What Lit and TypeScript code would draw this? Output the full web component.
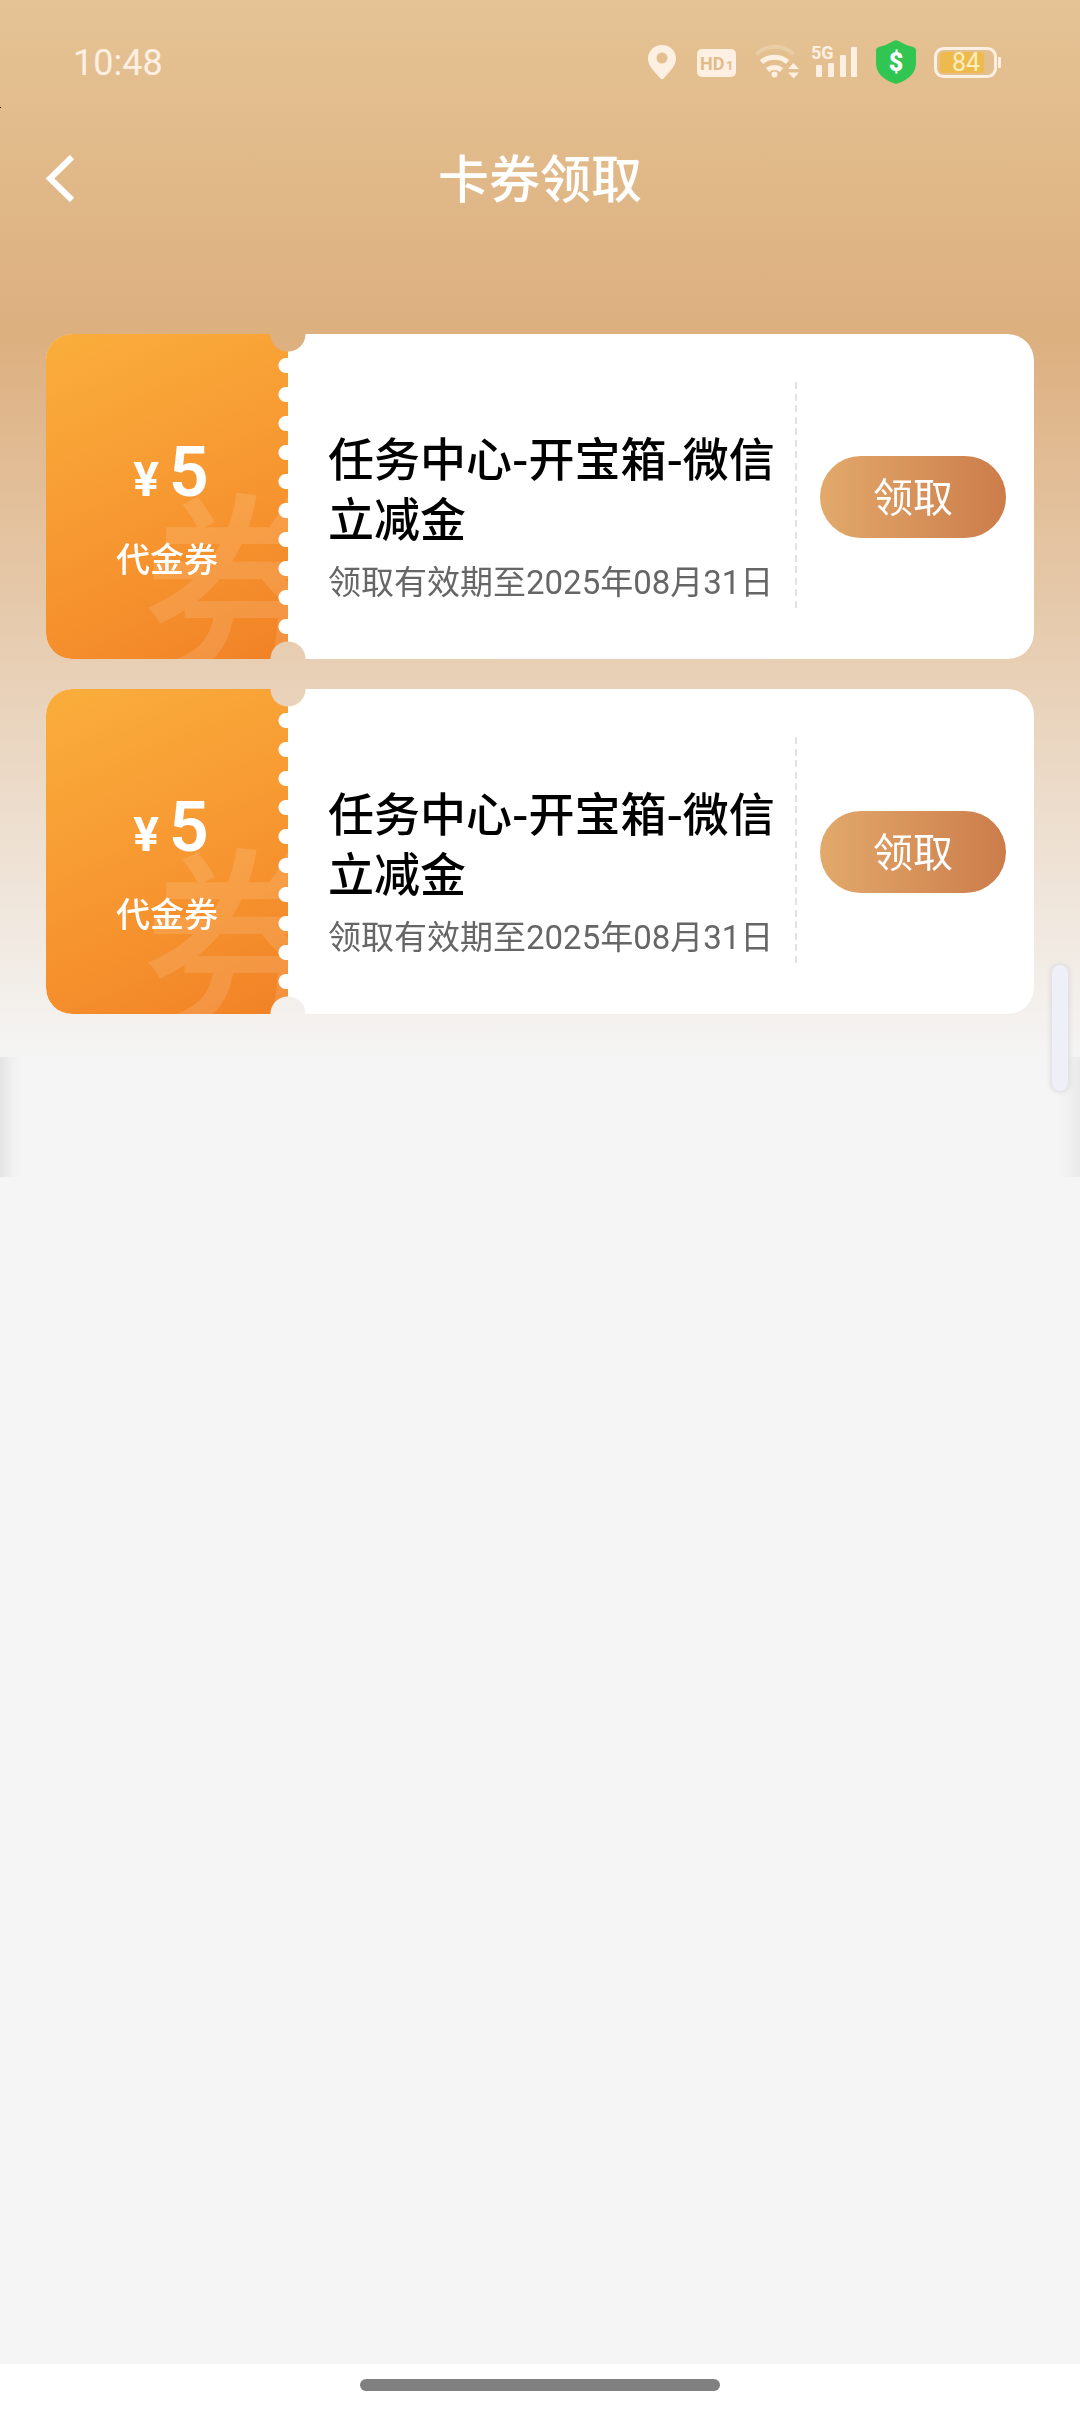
import { LitElement, html, css } from "lit";
import { customElement, property } from "lit/decorators.js";

interface Coupon {
  amount: string;
  kind: string;
  title: string;
  validity: string;
}

const coupons: Coupon[] = [
  { amount: "5", kind: "代金券", title: "任务中心-开宝箱-微信立减金", validity: "领取有效期至2025年08月31日" },
  { amount: "5", kind: "代金券", title: "任务中心-开宝箱-微信立减金", validity: "领取有效期至2025年08月31日" },
];

@customElement("status-bar")
export class StatusBar extends LitElement {
  static styles = css`
    :host {
      display: flex;
      align-items: center;
      justify-content: space-between;
      box-sizing: border-box;
      height: 124px;
      padding: 0 78px 0 73px;
      color: #fdf0e2;
      font-family: Roboto, sans-serif;
    }
    .time {
      padding-top: 2px;
      font-size: 36px;
      line-height: 44px;
    }
    .icons {
      display: block;
    }
    .light {
      fill: #fdf0e2;
    }
    .arc {
      fill: none;
      stroke: #fdf0e2;
      stroke-width: 5;
    }
    .faint {
      stroke-width: 4;
      opacity: 0.25;
    }
    .tag {
      font-weight: 700;
      font-size: 18px;
    }
    .cutout {
      fill: #e2bb8b;
    }
    .small {
      font-size: 13px;
    }
    .shield {
      fill: #31c552;
    }
    .dollar {
      fill: #ffffff;
      font-size: 25px;
      font-weight: 900;
      text-anchor: middle;
    }
    .shell {
      fill: none;
      stroke: #fdf0e2;
      stroke-width: 3;
    }
    .charge {
      fill: #efba4d;
    }
    .level {
      fill: #fdeebc;
      font-size: 25px;
      text-anchor: middle;
    }
  `;

  render() {
    return html`
      <span class="time">10:48</span>
      <svg class="icons" width="354" height="48" viewBox="0 0 354 48" role="img" aria-label="5G 84">
        <path
          class="light"
          fill-rule="evenodd"
          d="M14 7C6 7 0 13 0 20.500C0 28 6 33 12 40Q14 42.500 16 40C22 33 28 28 28 20.500C28 13 22 7 14 7ZM14 14.500a5.500 5.500 0 1 1 0 11a5.500 5.500 0 1 1 0-11Z"
        />
        <rect class="light" x="49" y="11" width="39" height="28" rx="5" />
        <text class="tag cutout" x="52" y="32">HD</text>
        <text class="tag cutout small" x="78" y="32">1</text>

        <path class="arc faint" d="M108.500 16A27 27 0 0 1 145.500 16" />
        <path class="arc" d="M113.500 24A20 20 0 0 1 139.500 24" />
        <path class="arc" d="M119.500 32A11 11 0 0 1 133.500 32" />
        <circle class="light" cx="126.500" cy="36.500" r="3" />
        <path class="light" d="M140 31L145.500 25L151 31ZM140 34.500H151L145.500 40.500Z" />

        <text class="tag light" x="163" y="21">5G</text>
        <rect class="light" x="168" y="27" width="6" height="12" rx="1" />
        <rect class="light" x="180" y="25" width="6" height="14" rx="1" />
        <rect class="light" x="192" y="17" width="6" height="22" rx="1" />
        <rect class="light" x="203" y="9" width="6" height="30" rx="1" />

        <path
          class="shield"
          d="M245.500 3Q248 1.500 250.500 3Q257 7 265 9Q268 9.500 268 13V25C268 35 261 41 251 45Q248 46.500 245 45C235 41 228 35 228 25V13Q228 9.500 231 9Q239 7 245.500 3Z"
        />
        <text class="dollar" x="248" y="33">$</text>

        <rect class="shell" x="287.500" y="10.500" width="60" height="28" rx="8" />
        <rect class="charge" x="292" y="14" width="44" height="21" rx="3" />
        <rect class="light" x="350" y="19" width="3" height="11" rx="1" />
        <text class="level" x="318" y="33">84</text>
      </svg>
    `;
  }
}

@customElement("coupon-card")
export class CouponCard extends LitElement {
  @property({ attribute: false }) coupon!: Coupon;

  static styles = css`
    :host {
      display: block;
      font-family: Roboto, "Noto Sans CJK SC", sans-serif;
    }
    .card {
      display: flex;
      min-height: 325px;
      border-radius: 26px;
      overflow: hidden;
      background: #ffffff;
      -webkit-mask-image: radial-gradient(circle at 242px 0, transparent 17px, #000 18px),
        radial-gradient(circle at 242px 100%, transparent 17px, #000 18px);
      mask-image: radial-gradient(circle at 242px 0, transparent 17px, #000 18px),
        radial-gradient(circle at 242px 100%, transparent 17px, #000 18px);
      -webkit-mask-composite: source-in;
      mask-composite: intersect;
    }
    .stub {
      position: relative;
      display: flex;
      flex: 0 0 242px;
      overflow: hidden;
      color: #ffffff;
      background: linear-gradient(155deg, #faae3c 0%, #f6922e 65%, #f18226 100%);
    }
    .watermark {
      position: absolute;
      left: 96px;
      top: 142px;
      font: 500 200px/200px "Noto Sans CJK SC", sans-serif;
      color: rgba(255, 255, 255, 0.12);
    }
    .value {
      position: relative;
      display: flex;
      flex: 1;
      flex-direction: column;
      align-items: center;
      justify-content: center;
      gap: 16px;
      padding: 22px 0 0 10px;
    }
    .price {
      display: flex;
      align-items: baseline;
      gap: 10px;
      padding-left: 8px;
      font-size: 70px;
      line-height: 80px;
      font-weight: 600;
    }
    .sign {
      font-size: 48px;
      font-weight: 700;
    }
    .kind {
      font-size: 34px;
      line-height: 48px;
      font-weight: 500;
    }
    .teeth {
      flex: 0 0 10px;
      margin: 17px 0 18px;
      background-image: radial-gradient(circle at 8px 50%, #fff 7px, transparent 8px),
        linear-gradient(transparent 7px, #fff 7px, #fff 22px, transparent 22px);
      background-size: 10px 29px, 3px 29px;
      background-position: 0 0, 100% 0;
      background-repeat: repeat-y;
    }
    .info {
      display: flex;
      flex: 1;
      min-width: 0;
      flex-direction: column;
      justify-content: center;
      gap: 12px;
      padding: 40px 0 0 40px;
    }
    .title {
      margin: 0;
      color: #000000;
      font: 500 46px/60px "Noto Sans CJK SC", sans-serif;
    }
    .validity {
      margin: 0;
      color: #666666;
      font-size: 33px;
      line-height: 50px;
      font-weight: 400;
      white-space: nowrap;
    }
    .divider {
      flex: 0 0 2px;
      margin: 48px 0 50px;
      background: repeating-linear-gradient(
        #e2e2e2 0,
        #e2e2e2 7px,
        transparent 7px,
        transparent 12px,
        #e2e2e2 12px,
        #e2e2e2 19px,
        transparent 19px,
        transparent 23px
      );
    }
    .action {
      display: flex;
      align-items: center;
      padding: 0 28px 0 23px;
    }
    .claim {
      width: 186px;
      height: 82px;
      padding: 0 0 4px;
      border: 0;
      border-radius: 41px;
      color: #ffffff;
      font: 400 40px/48px "Noto Sans CJK SC", sans-serif;
      background: linear-gradient(90deg, #e2a96b, #cc7c4a);
      cursor: pointer;
    }
  `;

  render() {
    const c = this.coupon;
    return html`
      <article class="card">
        <div class="stub">
          <span class="watermark" aria-hidden="true">券</span>
          <div class="value">
            <div class="price"><span class="sign">¥</span><span>${c.amount}</span></div>
            <div class="kind">${c.kind}</div>
          </div>
          <div class="teeth"></div>
        </div>
        <div class="info">
          <h2 class="title">${c.title}</h2>
          <p class="validity">${c.validity}</p>
        </div>
        <div class="divider"></div>
        <div class="action"><button class="claim" type="button">领取</button></div>
      </article>
    `;
  }
}

@customElement("app-root")
export class AppRoot extends LitElement {
  static styles = css`
    :host {
      position: relative;
      display: flex;
      flex-direction: column;
      min-height: 100vh;
      overflow: hidden;
      font-family: "Noto Sans CJK SC", sans-serif;
      background: linear-gradient(#e5c394 0, #ddb080 320px, #ddb080 340px, #f5f5f5 1060px);
    }
    .header {
      display: grid;
      grid-template-columns: 72px 1fr 72px;
      align-items: center;
      height: 110px;
      padding: 0 24px;
    }
    .back {
      display: flex;
      align-items: center;
      justify-content: center;
      height: 72px;
      padding: 0;
      border: 0;
      background: none;
      cursor: pointer;
    }
    .heading {
      margin: 0;
      padding-bottom: 6px;
      color: #ffffff;
      text-align: center;
      font-size: 51px;
      line-height: 72px;
      font-weight: 500;
    }
    .list {
      display: flex;
      flex: 1;
      flex-direction: column;
      gap: 30px;
      padding: 100px 46px 60px;
    }
    .gesture {
      display: flex;
      justify-content: center;
      align-items: flex-start;
      height: 33px;
      padding-top: 15px;
      background: #ffffff;
    }
    .pill {
      width: 33.3333%;
      height: 12px;
      border-radius: 6px;
      background: #808080;
    }
    .edge {
      position: absolute;
      top: 1057px;
      width: 22px;
      height: 120px;
    }
    .left {
      left: 0;
      background: linear-gradient(90deg, #e3e3e3, #f0f0f0 55%, #f5f5f5);
    }
    .right {
      right: 0;
      background: linear-gradient(270deg, #e9e9e9, #f1f1f1 55%, #f5f5f5);
    }
    .handle {
      position: absolute;
      top: 965px;
      right: 12px;
      width: 16px;
      height: 126px;
      border-radius: 8px;
      background: #efeff7;
      box-shadow: 0 0 4px 2px #dfdddf;
    }
    .speck {
      position: absolute;
      top: 107px;
      left: 0;
      width: 1px;
      height: 1px;
      background: #000000;
    }
  `;

  render() {
    return html`
      <status-bar></status-bar>
      <header class="header">
        <button class="back" type="button" aria-label="返回">
          <svg width="30" height="48" viewBox="0 0 30 48" fill="none" stroke="#ffffff" stroke-width="6">
            <path d="M27 2L5 23.500L27 45" />
          </svg>
        </button>
        <h1 class="heading">卡券领取</h1>
      </header>
      <main class="list">
        ${coupons.map((c) => html`<coupon-card .coupon=${c}></coupon-card>`)}
      </main>
      <footer class="gesture"><div class="pill"></div></footer>
      <div class="edge left"></div>
      <div class="edge right"></div>
      <div class="handle"></div>
      <div class="speck"></div>
    `;
  }
}
